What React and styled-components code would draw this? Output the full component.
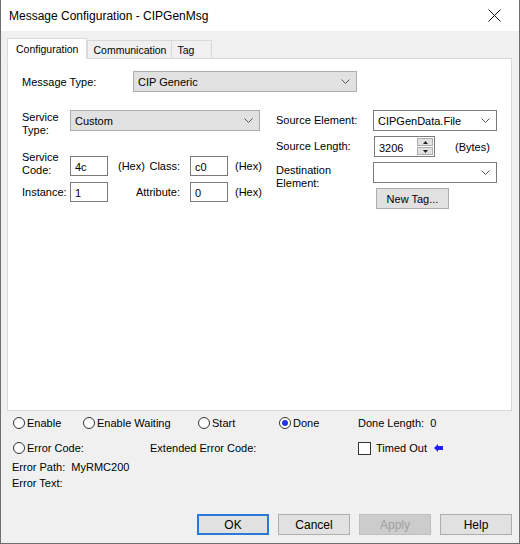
import React from "react";
import styled, { createGlobalStyle } from "styled-components";

const GlobalStyle = createGlobalStyle`
    html, body {
        margin: 0;
        padding: 0;
        background: #ffffff;
    }
    body {
        font-family: "Liberation Sans", Arial, sans-serif;
        font-size: 11px;
        color: #000000;
    }
`;

const Window = styled.div`
    width: 520px;
    height: 544px;
    box-sizing: border-box;
    border: 1px solid #6e6e6e;
    border-top: none;
    background: #f0f0f0;
    display: flex;
    flex-direction: column;
`;

const TitleBar = styled.div`
    height: 31px;
    background: #ffffff;
    display: flex;
    align-items: center;
    justify-content: space-between;
    padding: 0 18px 0 8px;
    font-size: 12px;
`;

const Body = styled.div`
    flex: 1;
    display: flex;
    flex-direction: column;
    padding: 6px 7px 0 6px;
`;

const TabStrip = styled.div`
    display: flex;
    align-items: flex-end;
    height: 21px;
    position: relative;
    z-index: 1;
`;

const Tab = styled.div`
    box-sizing: border-box;
    height: ${(p) => (p.$active ? "21px" : "18px")};
    min-width: ${(p) => p.$min || "0"};
    padding: 0 ${(p) => (p.$active ? "8px" : "5px")};
    margin-right: ${(p) => (p.$active ? "0" : "-1px")};
    border: 1px solid #d9d9d9;
    border-bottom: ${(p) => (p.$active ? "1px solid #ffffff" : "none")};
    background: ${(p) => (p.$active ? "#ffffff" : "#f0f0f0")};
    display: flex;
    align-items: center;
    font-size: 10.5px;
    margin-bottom: ${(p) => (p.$active ? "-1px" : "0")};
`;

const Panel = styled.div`
    box-sizing: border-box;
    height: 353px;
    background: #ffffff;
    border: 1px solid #d9d9d9;
    padding: 12px 14px 0 14px;
    display: flex;
    flex-direction: column;
`;

const TypeRow = styled.div`
    display: flex;
    align-items: center;
`;

const TypeLabel = styled.div`
    width: 111px;
    padding-top: 1px;
`;

const Columns = styled.div`
    display: flex;
    margin-top: 18px;
`;

const LeftCol = styled.div`
    width: 254px;
    display: flex;
    flex-direction: column;
`;

const RightCol = styled.div`
    display: grid;
    grid-template-columns: 97px 124px;
    grid-auto-rows: 21px;
    row-gap: 5px;
    align-content: start;
`;

const ServiceTypeRow = styled.div`
    display: flex;
    align-items: flex-start;
`;

const TwoLine = styled.div`
    width: 48px;
    line-height: 13px;
    padding-top: ${(p) => p.$top || "1px"};
    margin-top: ${(p) => p.$mt || "0"};
`;

const CodeGrid = styled.div`
    display: grid;
    grid-template-columns: 48px 38px 82px 38px auto;
    grid-auto-rows: 19px;
    row-gap: 7px;
    margin-top: 19px;
    align-items: center;
`;

const Mid = styled.div`
    display: flex;
    justify-content: space-between;
    align-items: center;
    padding: 0 10px 0 10px;
    height: 100%;
`;

const Hex = styled.span`
    padding-left: 7px;
`;

const Select = styled.div`
    box-sizing: border-box;
    width: ${(p) => p.$w};
    height: 21px;
    border: 1px solid ${(p) => (p.$white ? "#7a7a7a" : "#adadad")};
    background: ${(p) => (p.$white ? "#ffffff" : "#e1e1e1")};
    display: flex;
    align-items: center;
    justify-content: space-between;
    padding: 0 6px 0 4px;
`;

const TextBox = styled.div`
    box-sizing: border-box;
    width: 38px;
    height: 20px;
    border: 1px solid #7a7a7a;
    background: #ffffff;
    display: flex;
    align-items: center;
    padding: 2px 0 0 4px;
`;

const FieldLabel = styled.div`
    height: 21px;
    padding-top: ${(p) => p.$top || "4px"};
    box-sizing: border-box;
    line-height: 13px;
`;

const LengthRow = styled.div`
    display: flex;
    align-items: center;
    width: 160px;
`;

const Spin = styled.div`
    box-sizing: border-box;
    width: 61px;
    height: 21px;
    margin-left: 1px;
    border: 1px solid #7a7a7a;
    background: #ffffff;
    display: flex;
    align-items: center;
    padding-left: 4px;
    padding-top: 2px;
    justify-content: space-between;
`;

const SpinButtons = styled.div`
    width: 16px;
    height: 17px;
    margin-right: 1px;
    margin-top: -2px;
    display: flex;
    flex-direction: column;
    gap: 1px;
`;

const SpinButton = styled.div`
    flex: 1;
    background: #e1e1e1;
    border: 1px solid #adadad;
    display: flex;
    align-items: center;
    justify-content: center;
`;

const Bytes = styled.span`
    margin-left: 20px;
`;

const SmallButton = styled.div`
    box-sizing: border-box;
    width: 73px;
    height: 21px;
    margin-left: 3px;
    border: 1px solid #adadad;
    background: #e1e1e1;
    display: flex;
    align-items: center;
    justify-content: center;
`;

const StatusRow = styled.div`
    display: grid;
    grid-template-columns: ${(p) => p.$cols};
    align-items: center;
    height: 16px;
    margin-top: ${(p) => p.$mt};
    padding-left: 6px;
    font-size: 11px;
`;

const RadioItem = styled.div`
    display: flex;
    align-items: center;
    gap: 2px;
`;

const RadioCircle = styled.span`
    box-sizing: border-box;
    width: 12px;
    height: 12px;
    border-radius: 50%;
    border: 1px solid #333333;
    background: #ffffff;
    display: flex;
    align-items: center;
    justify-content: center;
    &::after {
        content: "";
        width: 6px;
        height: 6px;
        border-radius: 50%;
        background: ${(p) => (p.$checked ? "#1f34e6" : "transparent")};
    }
`;

const CheckBox = styled.span`
    box-sizing: border-box;
    width: 13px;
    height: 13px;
    border: 1px solid #333333;
    background: #ffffff;
    margin-right: 3px;
`;

const InfoLine = styled.div`
    padding-left: 5px;
    font-size: 11px;
    line-height: 16px;
    margin-top: ${(p) => p.$mt || "0"};
`;

const ButtonBar = styled.div`
    display: flex;
    justify-content: flex-end;
    gap: 9px;
    margin-top: auto;
    margin-bottom: 8px;
`;

const DialogButton = styled.div`
    box-sizing: border-box;
    width: 72px;
    height: 21px;
    display: flex;
    align-items: center;
    justify-content: center;
    font-size: 12px;
    background: ${(p) => (p.$disabled ? "#cccccc" : "#e1e1e1")};
    color: ${(p) => (p.$disabled ? "#a0a0a0" : "#000000")};
    border: ${(p) =>
        p.$default ? "2px solid #2b78d6" : `1px solid ${p.$disabled ? "#bfbfbf" : "#adadad"}`};
`;

const Chevron = () => (
    <svg width="9" height="5" viewBox="0 0 9 5">
        <polyline points="0.5,0.5 4.5,4.5 8.5,0.5" fill="none" stroke="#555" strokeWidth="1" />
    </svg>
);

const CloseIcon = () => (
    <svg width="13" height="13" viewBox="0 0 13 13">
        <path d="M0.5 0.5 L12.5 12.5 M12.5 0.5 L0.5 12.5" stroke="#111" strokeWidth="1" />
    </svg>
);

const Arrow = () => (
    <svg width="9" height="8" viewBox="0 0 9 8" style={{ marginLeft: 5 }}>
        <polygon points="0,4 4,0 4,2 9,2 9,6 4,6 4,8" fill="#1f1fff" />
    </svg>
);

const Tri = ({ up }) => (
    <svg width="5" height="3" viewBox="0 0 5 3">
        <polygon points={up ? "0,3 5,3 2.5,0" : "0,0 5,0 2.5,3"} fill="#222" />
    </svg>
);

const Radio = ({ checked, children }) => (
    <RadioItem>
        <RadioCircle $checked={checked} />
        {children}
    </RadioItem>
);

const App = () => {
    return (
        <>
            <GlobalStyle />
            <Window>
                <TitleBar>
                    <span>Message Configuration - CIPGenMsg</span>
                    <CloseIcon />
                </TitleBar>
                <Body>
                    <TabStrip>
                        <Tab $active>Configuration</Tab>
                        <Tab>Communication</Tab>
                        <Tab $min="41px">Tag</Tab>
                    </TabStrip>
                    <Panel>
                        <TypeRow>
                            <TypeLabel>Message Type:</TypeLabel>
                            <Select $w="224px">
                                <span>CIP Generic</span>
                                <Chevron />
                            </Select>
                        </TypeRow>
                        <Columns>
                            <LeftCol>
                                <ServiceTypeRow>
                                    <TwoLine>
                                        Service
                                        <br />
                                        Type:
                                    </TwoLine>
                                    <Select $w="190px">
                                        <span>Custom</span>
                                        <Chevron />
                                    </Select>
                                </ServiceTypeRow>
                                <CodeGrid>
                                    <TwoLine $top="0" $mt="-4px">
                                        Service
                                        <br />
                                        Code:
                                    </TwoLine>
                                    <TextBox>4c</TextBox>
                                    <Mid>
                                        <span>(Hex)</span>
                                        <span>Class:</span>
                                    </Mid>
                                    <TextBox>c0</TextBox>
                                    <Hex>(Hex)</Hex>
                                    <span>Instance:</span>
                                    <TextBox>1</TextBox>
                                    <Mid>
                                        <span />
                                        <span>Attribute:</span>
                                    </Mid>
                                    <TextBox>0</TextBox>
                                    <Hex>(Hex)</Hex>
                                </CodeGrid>
                            </LeftCol>
                            <RightCol>
                                <FieldLabel>Source Element:</FieldLabel>
                                <Select $w="124px" $white>
                                    <span>CIPGenData.File</span>
                                    <Chevron />
                                </Select>
                                <FieldLabel>Source Length:</FieldLabel>
                                <LengthRow>
                                    <Spin>
                                        <span>3206</span>
                                        <SpinButtons>
                                            <SpinButton>
                                                <Tri up />
                                            </SpinButton>
                                            <SpinButton>
                                                <Tri />
                                            </SpinButton>
                                        </SpinButtons>
                                    </Spin>
                                    <Bytes>(Bytes)</Bytes>
                                </LengthRow>
                                <FieldLabel $top="2px">
                                    Destination
                                    <br />
                                    Element:
                                </FieldLabel>
                                <Select $w="124px" $white>
                                    <span />
                                    <Chevron />
                                </Select>
                                <span />
                                <SmallButton>New Tag...</SmallButton>
                            </RightCol>
                        </Columns>
                    </Panel>
                    <StatusRow $cols="70px 115px 81px 79px auto" $mt="4px">
                        <Radio>Enable</Radio>
                        <Radio>Enable Waiting</Radio>
                        <Radio>Start</Radio>
                        <Radio checked>Done</Radio>
                        <span>Done Length:&nbsp; 0</span>
                    </StatusRow>
                    <StatusRow $cols="137px 208px auto" $mt="9px">
                        <Radio>Error Code:</Radio>
                        <span>Extended Error Code:</span>
                        <RadioItem>
                            <CheckBox />
                            Timed Out
                            <Arrow />
                        </RadioItem>
                    </StatusRow>
                    <InfoLine $mt="3px">Error Path:&nbsp; MyRMC200</InfoLine>
                    <InfoLine>Error Text:</InfoLine>
                    <ButtonBar>
                        <DialogButton $default>OK</DialogButton>
                        <DialogButton>Cancel</DialogButton>
                        <DialogButton $disabled>Apply</DialogButton>
                        <DialogButton>Help</DialogButton>
                    </ButtonBar>
                </Body>
            </Window>
        </>
    );
};

export default App;
